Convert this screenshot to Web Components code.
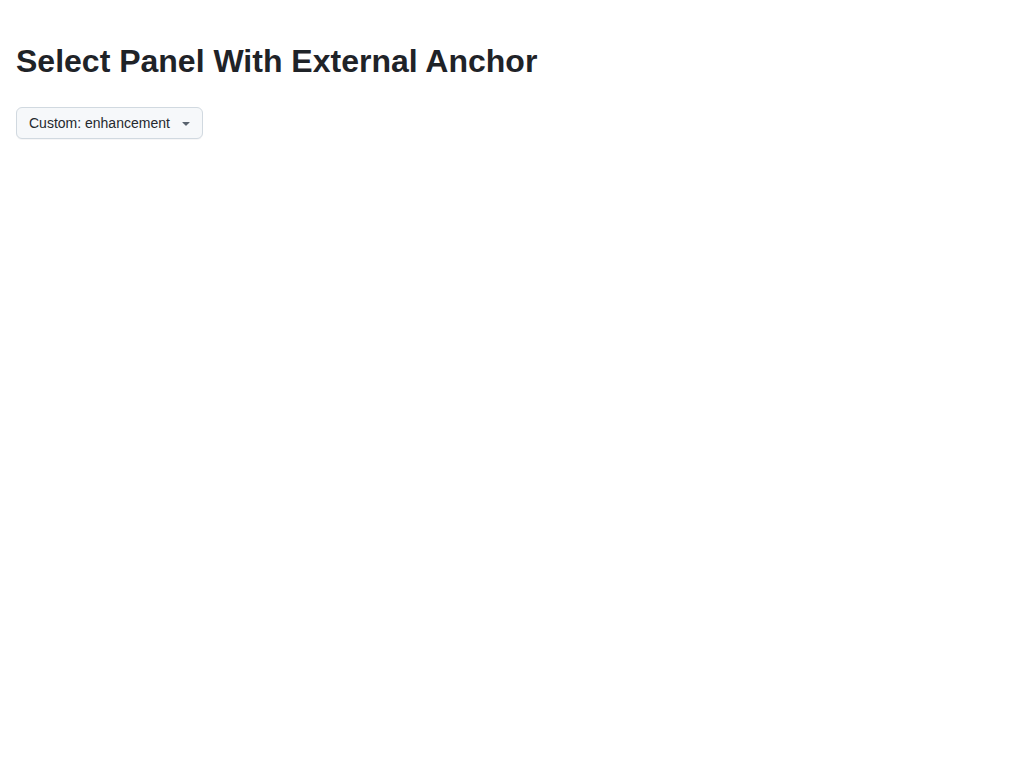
<!DOCTYPE html>
<html lang="en">
<head>
<meta charset="utf-8">
<title>Select Panel With External Anchor</title>
<style>
  body {
    margin: 0;
    background: #ffffff;
    color: #1f2328;
    font-family: "Liberation Sans", Arial, sans-serif;
    font-size: 14px;
    line-height: 21px;
  }
</style>
</head>
<body>
<story-page>
  <span slot="title">Select Panel With External Anchor</span>
  <select-anchor>Custom: enhancement</select-anchor>
</story-page>
<script>
  class StoryPage extends HTMLElement {
    constructor() {
      super();
      this.attachShadow({ mode: "open" }).innerHTML = `
        <style>
          :host { display: block; padding: 37px 16px 16px; }
          main { display: flex; flex-direction: column; align-items: flex-start; gap: 22px; }
          h1 { margin: 0; font-size: 32px; line-height: 48px; font-weight: 600; }
        </style>
        <main>
          <h1><slot name="title"></slot></h1>
          <slot></slot>
        </main>`;
    }
  }
  customElements.define("story-page", StoryPage);

  class SelectAnchor extends HTMLElement {
    constructor() {
      super();
      this.attachShadow({ mode: "open" }).innerHTML = `
        <style>
          :host { display: inline-flex; }
          button {
            display: flex;
            align-items: center;
            gap: 8px;
            box-sizing: border-box;
            height: 32px;
            margin: 0;
            padding: 0 8px 0 12px;
            border: 1px solid #d1d9e0;
            border-radius: 6px;
            background: #f6f8fa;
            box-shadow: 0 1px 0 rgba(31, 35, 40, 0.04);
            color: #25292e;
            font: 500 14px/20px "Liberation Sans", Arial, sans-serif;
            cursor: pointer;
          }
          button:hover { background: #eff2f5; }
          svg { display: block; fill: #59636e; }
        </style>
        <button type="button" aria-haspopup="true" aria-expanded="false">
          <span><slot></slot></span>
          <svg width="16" height="16" viewBox="0 0 16 16" aria-hidden="true">
            <path d="m4.427 7.427 3.396 3.396a.25.25 0 0 0 .354 0l3.396-3.396A.25.25 0 0 0 11.396 7H4.604a.25.25 0 0 0-.177.427Z"/>
          </svg>
        </button>`;
    }
  }
  customElements.define("select-anchor", SelectAnchor);
</script>
</body>
</html>
